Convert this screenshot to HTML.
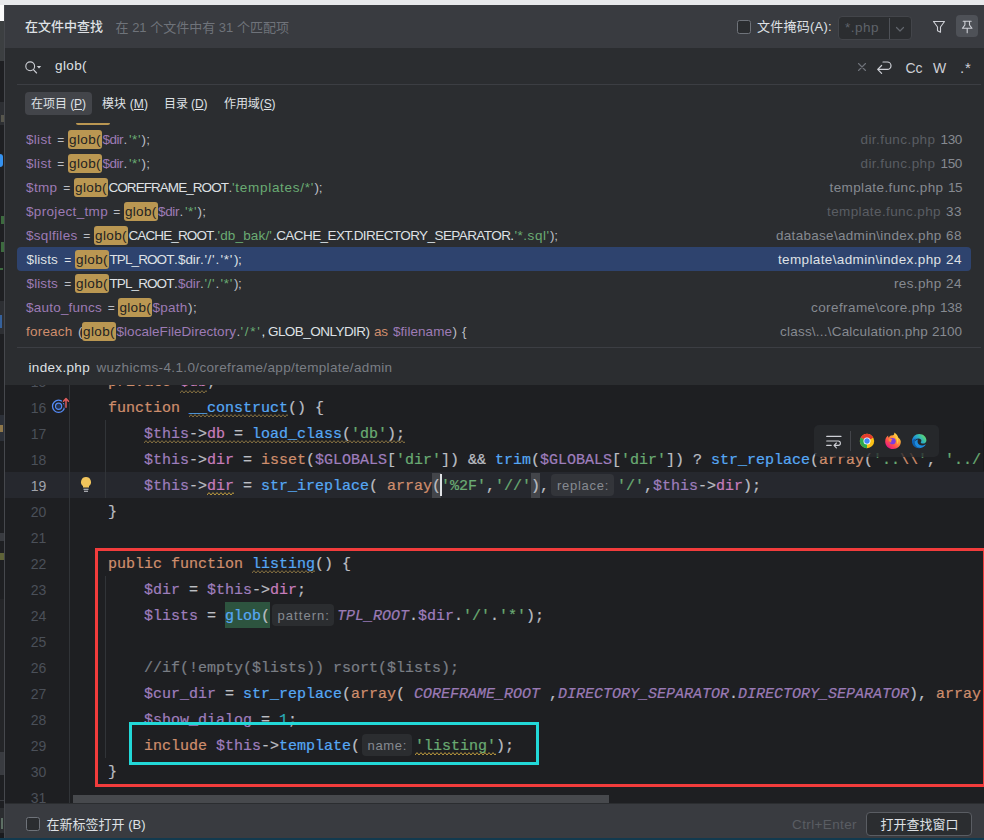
<!DOCTYPE html>
<html lang="zh-CN">
<head>
<meta charset="utf-8">
<title>在文件中查找</title>
<style>
*{box-sizing:border-box}
html,body{margin:0;padding:0}
body{width:984px;height:840px;overflow:hidden;position:relative;background:#1e1f22;font-family:"Liberation Sans","Noto Sans CJK SC",sans-serif;font-size:13px;color:#dfe1e5}
.a{position:absolute}
.t{position:absolute;white-space:pre;line-height:20px;height:20px}
.ui{font-family:"Liberation Sans","Noto Sans CJK SC",sans-serif}
.m{font-family:"Liberation Mono","Noto Sans CJK SC",monospace;font-size:15px;-webkit-text-stroke:0.22px}
.b{font-weight:bold}
.i{font-style:italic}
</style>
</head>
<body>
<div class="a" style="left:0px;top:0px;width:984px;height:5px;background:#e8e9eb"></div>
<div class="a" style="left:0px;top:5px;width:5px;height:15.5px;background:#fbfbfb"></div>
<div class="a" style="left:0px;top:20.5px;width:5px;height:40.5px;background:#3c3f41"></div>
<div class="a" style="left:0px;top:61px;width:5px;height:41px;background:#1e1f22"></div>
<div class="a" style="left:0px;top:102px;width:5px;height:23px;background:#2d2f33"></div>
<div class="a" style="left:1px;top:115px;width:3px;height:7px;background:#57564c"></div>
<div class="a" style="left:0px;top:125px;width:5px;height:683px;background:#1e1f22"></div>
<div class="a" style="left:0px;top:154px;width:2.5px;height:12.5px;background:#3592f0;border-radius:0 3px 3px 0"></div>
<div class="a" style="left:1px;top:216px;width:3px;height:8px;background:#3d6b3f"></div>
<div class="a" style="left:1px;top:242px;width:3px;height:10px;background:#3d6b3f"></div>
<div class="a" style="left:0px;top:268px;width:3px;height:1.5px;background:#3d6b3f"></div>
<div class="a" style="left:0px;top:301px;width:5px;height:33px;background:#2d2f33"></div>
<div class="a" style="left:0px;top:315px;width:2px;height:13px;background:#35619c"></div>
<div class="a" style="left:0px;top:415px;width:5px;height:26px;background:#2c3038"></div>
<div class="a" style="left:0px;top:425px;width:3px;height:7px;background:#8f774a"></div>
<div class="a" style="left:0px;top:533px;width:5px;height:8px;background:#393b40"></div>
<div class="a" style="left:0px;top:553px;width:4px;height:7px;background:#5f6338"></div>
<div class="a" style="left:0px;top:599px;width:5px;height:153px;background:#242528"></div>
<div class="a" style="left:0px;top:752px;width:5px;height:23px;background:#393b40"></div>
<div class="a" style="left:0px;top:800px;width:5px;height:1px;background:#393b40"></div>
<div class="a" style="left:0px;top:808px;width:5px;height:25px;background:#2b2d30"></div>
<div class="a" style="left:1px;top:818px;width:2px;height:11px;background:#5d6f64"></div>
<div class="a" style="left:0px;top:833px;width:5px;height:7px;background:#1a1b1e"></div>
<div class="a" style="left:5px;top:5px;width:979px;height:833px;background:#2b2d30"></div>
<div class="a" style="left:5px;top:5px;width:979px;height:43px;background:#393b40"></div>
<div class="a" style="left:4px;top:5px;width:1px;height:833px;background:#46484d"></div>
<div class="a" style="left:0px;top:838px;width:984px;height:2px;background:#123a4f"></div>
<span class="t ui" style="left:25px;top:17px;font-size:13px;color:#dfe1e5;font-weight:500;">在文件中查找</span>
<span class="t ui" style="left:115.5px;top:18px;font-size:13px;color:#6f737a;letter-spacing:0.007px;">在 21 个文件中有 31 个匹配项</span>
<div class="a" style="left:737px;top:20px;width:14px;height:14px;border:1px solid #6f737a;border-radius:2.5px;background:#2b2d30"></div>
<span class="t ui" style="left:757px;top:17px;font-size:13px;color:#dfe1e5;letter-spacing:0.256px;">文件掩码(A):</span>
<div class="a" style="left:838px;top:16px;width:73.5px;height:23.5px;border:1px solid #43454a;border-radius:4px;background:#2b2d30"></div>
<div class="a" style="left:889px;top:18px;width:1px;height:21px;background:#4e5157"></div>
<span class="t ui" style="left:845px;top:18px;font-size:13.5px;color:#5f636a;letter-spacing:0.494px;">*.php</span>
<svg class="a" style="left:894px;top:23.7px" width="12" height="10" viewBox="0 0 12 10"><path d="M2.5 3.5 L6 7 L9.5 3.5" fill="none" stroke="#62666d" stroke-width="1.2" stroke-linecap="round" stroke-linejoin="round"/></svg>
<svg class="a" style="left:931px;top:18.6px" width="16" height="16" viewBox="0 0 16 16"><path d="M2.5 2.5 H13.5 L9.5 8 V13.2 L6.5 11.7 V8 Z" fill="none" stroke="#ced0d6" stroke-width="1.1" stroke-linejoin="round"/></svg>
<div class="a" style="left:956px;top:15px;width:22px;height:22px;background:#4e5157;border-radius:4px"></div>
<svg class="a" style="left:959px;top:18px" width="16" height="16" viewBox="0 0 16 16"><path d="M4.2 3.3 H12.2 M5.9 3.3 V7 L3.4 10.3 H13 L10.5 7 V3.3 M8.2 10.3 V14.7" fill="none" stroke="#ced0d6" stroke-width="1.1" stroke-linecap="round" stroke-linejoin="round"/></svg>
<svg class="a" style="left:23px;top:59px" width="22" height="16" viewBox="0 0 22 16"><circle cx="7.2" cy="7.3" r="4.4" fill="none" stroke="#ced0d6" stroke-width="1.1"/><path d="M10.4 10.6 L13.6 14" stroke="#ced0d6" stroke-width="1.1" stroke-linecap="round"/><path d="M13.8 7 H18.2 L16 9.4 Z" fill="#ced0d6"/></svg>
<span class="t ui" style="left:55px;top:56px;font-size:13.5px;color:#dfe1e5;letter-spacing:0.394px;">glob(</span>
<svg class="a" style="left:856px;top:61px" width="12" height="12" viewBox="0 0 12 12"><path d="M2.5 2.5 L9.5 9.5 M9.5 2.5 L2.5 9.5" stroke="#6f737a" stroke-width="1.1" stroke-linecap="round"/></svg>
<svg class="a" style="left:876px;top:58px" width="18" height="18" viewBox="0 0 18 18"><path d="M7 4 H11.3 A3.7 3.7 0 0 1 11.3 11.4 H1.8 M5.6 7.5 L1.7 11.4 L5.6 15.3" fill="none" stroke="#ced0d6" stroke-width="1.2" stroke-linecap="round" stroke-linejoin="round"/></svg>
<span class="t ui" style="left:905.5px;top:57.5px;font-size:14px;color:#ced0d6;letter-spacing:-0.062px;">Cc</span>
<span class="t ui" style="left:933px;top:57.5px;font-size:14px;color:#ced0d6;letter-spacing:0.781px;">W</span>
<span class="t ui" style="left:960px;top:58px;font-size:15px;color:#ced0d6;letter-spacing:0.742px;">.*</span>
<div class="a" style="left:17px;top:84px;width:964px;height:1px;background:#3c3e43"></div>
<div class="a" style="left:25px;top:92px;width:67px;height:23px;background:#43454a;border-radius:4px"></div>
<span class="t ui" style="left:31px;top:94px;font-size:12px;color:#dfe1e5;letter-spacing:-0.051px;">在项目 (<u>P</u>)</span>
<span class="t ui" style="left:102px;top:94px;font-size:12px;color:#dfe1e5;letter-spacing:0.109px;">模块 (<u>M</u>)</span>
<span class="t ui" style="left:164px;top:94px;font-size:12px;color:#dfe1e5;letter-spacing:-0.086px;">目录 (<u>D</u>)</span>
<span class="t ui" style="left:224px;top:94px;font-size:12px;color:#dfe1e5;letter-spacing:-0.086px;">作用域(<u>S</u>)</span>
<div class="a" style="left:76px;top:122.5px;width:34px;height:2.2px;background:#ba9752;border-radius:0 0 3px 3px"></div>
<span class="t ui" style="left:26px;top:130px;font-size:13.5px;color:#9d7bb5;letter-spacing:0.297px;">$list</span>
<span class="t ui" style="left:57.3px;top:130px;font-size:12px;color:#bcbec4;">=</span>
<div class="a" style="left:67.7px;top:129.7px;width:34.6px;height:19.3px;background:#ba9752;border-radius:3px"></div>
<span class="t ui" style="left:69px;top:130px;font-size:13.5px;color:#1e1f22;letter-spacing:0.394px;">glob(</span>
<span class="t ui" style="left:102.5px;top:130px;font-size:13.5px;color:#9d7bb5;letter-spacing:-0.504px;">$dir</span>
<span class="t ui" style="left:123.5px;top:130px;font-size:13.5px;color:#bcbec4;letter-spacing:1.734px;">.</span>
<span class="t ui" style="left:129px;top:130px;font-size:13.5px;color:#6aab73;letter-spacing:0.526px;">&#x27;*&#x27;</span>
<span class="t ui" style="left:141.5px;top:130px;font-size:13.5px;color:#bcbec4;letter-spacing:0.375px;">);</span>
<span class="t ui" style="left:860.5px;top:130px;font-size:13.5px;color:#5a5d63;letter-spacing:0.432px;">dir.func.php</span>
<span class="t ui" style="left:940.5px;top:130px;font-size:13.5px;color:#868a91;letter-spacing:-0.344px;">130</span>
<span class="t ui" style="left:26px;top:154px;font-size:13.5px;color:#9d7bb5;letter-spacing:0.297px;">$list</span>
<span class="t ui" style="left:57.3px;top:154px;font-size:12px;color:#bcbec4;">=</span>
<div class="a" style="left:67.7px;top:153.7px;width:34.6px;height:19.3px;background:#ba9752;border-radius:3px"></div>
<span class="t ui" style="left:69px;top:154px;font-size:13.5px;color:#1e1f22;letter-spacing:0.394px;">glob(</span>
<span class="t ui" style="left:102.5px;top:154px;font-size:13.5px;color:#9d7bb5;letter-spacing:-0.504px;">$dir</span>
<span class="t ui" style="left:123.5px;top:154px;font-size:13.5px;color:#bcbec4;letter-spacing:1.734px;">.</span>
<span class="t ui" style="left:129px;top:154px;font-size:13.5px;color:#6aab73;letter-spacing:0.526px;">&#x27;*&#x27;</span>
<span class="t ui" style="left:141.5px;top:154px;font-size:13.5px;color:#bcbec4;letter-spacing:0.375px;">);</span>
<span class="t ui" style="left:860.5px;top:154px;font-size:13.5px;color:#5a5d63;letter-spacing:0.432px;">dir.func.php</span>
<span class="t ui" style="left:940.5px;top:154px;font-size:13.5px;color:#868a91;letter-spacing:-0.344px;">150</span>
<span class="t ui" style="left:26px;top:178px;font-size:13.5px;color:#9d7bb5;letter-spacing:0.371px;">$tmp</span>
<span class="t ui" style="left:63.3px;top:178px;font-size:12px;color:#bcbec4;">=</span>
<div class="a" style="left:73.7px;top:177.7px;width:34.6px;height:19.3px;background:#ba9752;border-radius:3px"></div>
<span class="t ui" style="left:75px;top:178px;font-size:13.5px;color:#1e1f22;letter-spacing:0.394px;">glob(</span>
<span class="t ui" style="left:108.5px;top:178px;font-size:13.5px;color:#dfe1e5;letter-spacing:-0.948px;">COREFRAME_ROOT</span>
<span class="t ui" style="left:228.5px;top:178px;font-size:13.5px;color:#bcbec4;letter-spacing:-0.266px;">.</span>
<span class="t ui" style="left:232px;top:178px;font-size:13.5px;color:#6aab73;letter-spacing:0.715px;">&#x27;templates/*&#x27;</span>
<span class="t ui" style="left:314.5px;top:178px;font-size:13.5px;color:#bcbec4;letter-spacing:-0.125px;">);</span>
<span class="t ui" style="left:829.5px;top:178px;font-size:13.5px;color:#868a91;letter-spacing:0.392px;">template.func.php</span>
<span class="t ui" style="left:948px;top:178px;font-size:13.5px;color:#868a91;letter-spacing:-0.516px;">15</span>
<span class="t ui" style="left:26px;top:202px;font-size:13.5px;color:#9d7bb5;letter-spacing:0.329px;">$project_tmp</span>
<span class="t ui" style="left:113.3px;top:202px;font-size:12px;color:#bcbec4;">=</span>
<div class="a" style="left:123.7px;top:201.7px;width:34.1px;height:19.3px;background:#ba9752;border-radius:3px"></div>
<span class="t ui" style="left:125px;top:202px;font-size:13.5px;color:#1e1f22;letter-spacing:0.294px;">glob(</span>
<span class="t ui" style="left:158px;top:202px;font-size:13.5px;color:#9d7bb5;letter-spacing:-0.379px;">$dir</span>
<span class="t ui" style="left:179.5px;top:202px;font-size:13.5px;color:#bcbec4;letter-spacing:1.734px;">.</span>
<span class="t ui" style="left:185px;top:202px;font-size:13.5px;color:#6aab73;letter-spacing:0.526px;">&#x27;*&#x27;</span>
<span class="t ui" style="left:197.5px;top:202px;font-size:13.5px;color:#bcbec4;letter-spacing:0.375px;">);</span>
<span class="t ui" style="left:827px;top:202px;font-size:13.5px;color:#5a5d63;letter-spacing:0.392px;">template.func.php</span>
<span class="t ui" style="left:946px;top:202px;font-size:13.5px;color:#868a91;letter-spacing:0.484px;">33</span>
<span class="t ui" style="left:26px;top:226px;font-size:13.5px;color:#9d7bb5;letter-spacing:0.302px;">$sqlfiles</span>
<span class="t ui" style="left:83.3px;top:226px;font-size:12px;color:#bcbec4;">=</span>
<div class="a" style="left:93.7px;top:225.7px;width:34.6px;height:19.3px;background:#ba9752;border-radius:3px"></div>
<span class="t ui" style="left:95px;top:226px;font-size:13.5px;color:#1e1f22;letter-spacing:0.394px;">glob(</span>
<span class="t ui" style="left:128.5px;top:226px;font-size:13.5px;color:#dfe1e5;letter-spacing:-0.877px;">CACHE_ROOT</span>
<span class="t ui" style="left:214px;top:226px;font-size:13.5px;color:#bcbec4;letter-spacing:-0.266px;">.</span>
<span class="t ui" style="left:217.5px;top:226px;font-size:13.5px;color:#6aab73;letter-spacing:0.144px;">&#x27;db_bak/&#x27;</span>
<span class="t ui" style="left:273px;top:226px;font-size:13.5px;color:#dfe1e5;letter-spacing:-0.575px;">.CACHE_EXT.DIRECTORY_SEPARATOR.</span>
<span class="t ui" style="left:514.5px;top:226px;font-size:13.5px;color:#6aab73;letter-spacing:0.511px;">&#x27;*.sql&#x27;</span>
<span class="t ui" style="left:550px;top:226px;font-size:13.5px;color:#bcbec4;letter-spacing:-0.125px;">);</span>
<span class="t ui" style="left:776px;top:226px;font-size:13.5px;color:#868a91;letter-spacing:0.297px;">database\admin\index.php</span>
<span class="t ui" style="left:946px;top:226px;font-size:13.5px;color:#868a91;letter-spacing:0.484px;">68</span>
<div class="a" style="left:17px;top:247px;width:954px;height:24px;background:#2e436e;border-radius:4px"></div>
<span class="t ui" style="left:26.5px;top:250px;font-size:13.5px;color:#dfe1e5;letter-spacing:0.122px;">$lists</span>
<span class="t ui" style="left:64.3px;top:250px;font-size:12px;color:#dfe1e5;">=</span>
<div class="a" style="left:74.7px;top:249.7px;width:34.6px;height:19.3px;background:#ba9752;border-radius:3px"></div>
<span class="t ui" style="left:76px;top:250px;font-size:13.5px;color:#1e1f22;letter-spacing:0.394px;">glob(</span>
<span class="t ui" style="left:109.5px;top:250px;font-size:13.5px;color:#dfe1e5;letter-spacing:-0.908px;">TPL_ROOT</span>
<span class="t ui" style="left:174px;top:250px;font-size:13.5px;color:#dfe1e5;letter-spacing:-0.266px;">.</span>
<span class="t ui" style="left:178px;top:250px;font-size:13.5px;color:#dfe1e5;letter-spacing:-0.129px;">$dir</span>
<span class="t ui" style="left:200px;top:250px;font-size:13.5px;color:#dfe1e5;letter-spacing:0.234px;">.</span>
<span class="t ui" style="left:204.5px;top:250px;font-size:13.5px;color:#dfe1e5;letter-spacing:0.531px;">&#x27;/&#x27;</span>
<span class="t ui" style="left:215.5px;top:250px;font-size:13.5px;color:#dfe1e5;letter-spacing:0.234px;">.</span>
<span class="t ui" style="left:220.5px;top:250px;font-size:13.5px;color:#dfe1e5;letter-spacing:0.693px;">&#x27;*&#x27;</span>
<span class="t ui" style="left:234px;top:250px;font-size:13.5px;color:#dfe1e5;letter-spacing:-0.375px;">);</span>
<span class="t ui" style="left:778px;top:250px;font-size:13.5px;color:#dfe1e5;letter-spacing:0.370px;">template\admin\index.php</span>
<span class="t ui" style="left:946px;top:250px;font-size:13.5px;color:#dfe1e5;letter-spacing:0.484px;">24</span>
<span class="t ui" style="left:26.5px;top:274px;font-size:13.5px;color:#9d7bb5;letter-spacing:0.122px;">$lists</span>
<span class="t ui" style="left:64.3px;top:274px;font-size:12px;color:#bcbec4;">=</span>
<div class="a" style="left:74.7px;top:273.7px;width:34.6px;height:19.3px;background:#ba9752;border-radius:3px"></div>
<span class="t ui" style="left:76px;top:274px;font-size:13.5px;color:#1e1f22;letter-spacing:0.394px;">glob(</span>
<span class="t ui" style="left:109.5px;top:274px;font-size:13.5px;color:#dfe1e5;letter-spacing:-0.908px;">TPL_ROOT</span>
<span class="t ui" style="left:174px;top:274px;font-size:13.5px;color:#bcbec4;letter-spacing:-0.266px;">.</span>
<span class="t ui" style="left:178px;top:274px;font-size:13.5px;color:#9d7bb5;letter-spacing:-0.129px;">$dir</span>
<span class="t ui" style="left:200px;top:274px;font-size:13.5px;color:#bcbec4;letter-spacing:0.234px;">.</span>
<span class="t ui" style="left:204.5px;top:274px;font-size:13.5px;color:#6aab73;letter-spacing:0.531px;">&#x27;/&#x27;</span>
<span class="t ui" style="left:215.5px;top:274px;font-size:13.5px;color:#bcbec4;letter-spacing:0.234px;">.</span>
<span class="t ui" style="left:220.5px;top:274px;font-size:13.5px;color:#6aab73;letter-spacing:0.693px;">&#x27;*&#x27;</span>
<span class="t ui" style="left:234px;top:274px;font-size:13.5px;color:#bcbec4;letter-spacing:-0.375px;">);</span>
<span class="t ui" style="left:894px;top:274px;font-size:13.5px;color:#868a91;letter-spacing:0.353px;">res.php</span>
<span class="t ui" style="left:946px;top:274px;font-size:13.5px;color:#868a91;letter-spacing:0.484px;">24</span>
<span class="t ui" style="left:26px;top:298px;font-size:13.5px;color:#9d7bb5;letter-spacing:0.222px;">$auto_funcs</span>
<span class="t ui" style="left:107.8px;top:298px;font-size:12px;color:#bcbec4;">=</span>
<div class="a" style="left:118.2px;top:297.7px;width:34.1px;height:19.3px;background:#ba9752;border-radius:3px"></div>
<span class="t ui" style="left:119.5px;top:298px;font-size:13.5px;color:#1e1f22;letter-spacing:0.294px;">glob(</span>
<span class="t ui" style="left:152.5px;top:298px;font-size:13.5px;color:#9d7bb5;letter-spacing:0.241px;">$path</span>
<span class="t ui" style="left:188px;top:298px;font-size:13.5px;color:#bcbec4;letter-spacing:0.625px;">);</span>
<span class="t ui" style="left:811px;top:298px;font-size:13.5px;color:#868a91;letter-spacing:0.413px;">coreframe\core.php</span>
<span class="t ui" style="left:940px;top:298px;font-size:13.5px;color:#868a91;letter-spacing:-0.177px;">138</span>
<span class="t ui" style="left:26px;top:322px;font-size:13.5px;color:#cf8e6d;letter-spacing:0.210px;">foreach</span>
<span class="t ui" style="left:78px;top:322px;font-size:13.5px;color:#bcbec4;letter-spacing:-0.500px;">(</span>
<div class="a" style="left:81.7px;top:321.7px;width:34.6px;height:19.3px;background:#ba9752;border-radius:3px"></div>
<span class="t ui" style="left:83px;top:322px;font-size:13.5px;color:#1e1f22;letter-spacing:0.394px;">glob(</span>
<span class="t ui" style="left:116.5px;top:322px;font-size:13.5px;color:#9d7bb5;letter-spacing:0.048px;">$localeFileDirectory</span>
<span class="t ui" style="left:236.5px;top:322px;font-size:13.5px;color:#bcbec4;letter-spacing:-0.266px;">.</span>
<span class="t ui" style="left:240.5px;top:322px;font-size:13.5px;color:#6aab73;letter-spacing:1.707px;">&#x27;/*&#x27;</span>
<span class="t ui" style="left:261.5px;top:322px;font-size:13.5px;color:#dfe1e5;letter-spacing:-0.535px;">, GLOB_ONLYDIR)</span>
<span class="t ui" style="left:374px;top:322px;font-size:13.5px;color:#cf8e6d;letter-spacing:-0.383px;">as</span>
<span class="t ui" style="left:393px;top:322px;font-size:13.5px;color:#9d7bb5;letter-spacing:0.050px;">$filename</span>
<span class="t ui" style="left:452.5px;top:322px;font-size:13.5px;color:#bcbec4;letter-spacing:0.578px;">) {</span>
<span class="t ui" style="left:780px;top:322px;font-size:13.5px;color:#868a91;letter-spacing:0.217px;">class\...\Calculation.php</span>
<span class="t ui" style="left:932px;top:322px;font-size:13.5px;color:#868a91;letter-spacing:-0.012px;">2100</span>
<div class="a" style="left:17px;top:347px;width:964px;height:1px;background:#3c3e43"></div>
<span class="t ui" style="left:28.5px;top:358.4px;font-size:13.5px;color:#dfe1e5;letter-spacing:0.326px;">index.php</span>
<span class="t ui" style="left:96.5px;top:358.4px;font-size:13.5px;color:#7a7e85;letter-spacing:0.357px;">wuzhicms-4.1.0/coreframe/app/template/admin</span>
<div class="a" style="left:5px;top:385px;width:979px;height:418px;background:#1e1f22"></div>
<div class="a" style="left:5px;top:472px;width:979px;height:26px;background:#26282e"></div>
<div class="a" style="left:69px;top:385px;width:1px;height:418px;background:#313438"></div>
<div class="a" style="left:105px;top:420px;width:1px;height:78px;background:#313438"></div>
<div class="a" style="left:105px;top:576px;width:1px;height:182px;background:#313438"></div>
<span class="t ui" style="left:16.3px;top:369px;font-size:14px;color:#4b5059;text-align:right;width:30px;clip-path:inset(16px 0 0 0);line-height:26px;height:26px;">15</span>
<span class="t ui" style="left:16.3px;top:395px;font-size:14px;color:#4b5059;text-align:right;width:30px;line-height:26px;height:26px;">16</span>
<span class="t ui" style="left:16.3px;top:421px;font-size:14px;color:#4b5059;text-align:right;width:30px;line-height:26px;height:26px;">17</span>
<span class="t ui" style="left:16.3px;top:447px;font-size:14px;color:#4b5059;text-align:right;width:30px;line-height:26px;height:26px;">18</span>
<span class="t ui" style="left:16.3px;top:473px;font-size:14px;color:#a1a3ab;text-align:right;width:30px;line-height:26px;height:26px;">19</span>
<span class="t ui" style="left:16.3px;top:499px;font-size:14px;color:#4b5059;text-align:right;width:30px;line-height:26px;height:26px;">20</span>
<span class="t ui" style="left:16.3px;top:525px;font-size:14px;color:#4b5059;text-align:right;width:30px;line-height:26px;height:26px;">21</span>
<span class="t ui" style="left:16.3px;top:551px;font-size:14px;color:#4b5059;text-align:right;width:30px;line-height:26px;height:26px;">22</span>
<span class="t ui" style="left:16.3px;top:577px;font-size:14px;color:#4b5059;text-align:right;width:30px;line-height:26px;height:26px;">23</span>
<span class="t ui" style="left:16.3px;top:603px;font-size:14px;color:#4b5059;text-align:right;width:30px;line-height:26px;height:26px;">24</span>
<span class="t ui" style="left:16.3px;top:629px;font-size:14px;color:#4b5059;text-align:right;width:30px;line-height:26px;height:26px;">25</span>
<span class="t ui" style="left:16.3px;top:655px;font-size:14px;color:#4b5059;text-align:right;width:30px;line-height:26px;height:26px;">26</span>
<span class="t ui" style="left:16.3px;top:681px;font-size:14px;color:#4b5059;text-align:right;width:30px;line-height:26px;height:26px;">27</span>
<span class="t ui" style="left:16.3px;top:707px;font-size:14px;color:#4b5059;text-align:right;width:30px;line-height:26px;height:26px;">28</span>
<span class="t ui" style="left:16.3px;top:733px;font-size:14px;color:#4b5059;text-align:right;width:30px;line-height:26px;height:26px;">29</span>
<span class="t ui" style="left:16.3px;top:759px;font-size:14px;color:#4b5059;text-align:right;width:30px;line-height:26px;height:26px;">30</span>
<span class="t ui" style="left:16.3px;top:785px;font-size:14px;color:#4b5059;text-align:right;width:30px;clip-path:inset(0 0 8px 0);line-height:26px;height:26px;">31</span>
<span class="t m" style="left:108px;top:370px;font-size:15px;color:#cf8e6d;clip-path:inset(15px 0 0 0);line-height:26px;height:26px;">private</span>
<span class="t m" style="left:180px;top:370px;font-size:15px;color:#c77dbb;clip-path:inset(15px 0 0 0);line-height:26px;height:26px;">$db</span>
<span class="t m" style="left:207px;top:370px;font-size:15px;color:#bcbec4;clip-path:inset(15px 0 0 0);line-height:26px;height:26px;">;</span>
<svg class="a" style="left:180px;top:389.5px" width="27" height="4.5" viewBox="0 0 27 4.5"><path d="M0 3.0 L2 0.6 L4 3 L6 0.6 L8 3 L10 0.6 L12 3 L14 0.6 L16 3 L18 0.6 L20 3 L22 0.6 L24 3 L26 0.6 L28 3" fill="none" stroke="#857042" stroke-width="1"/></svg>
<span class="t m" style="left:108px;top:396px;font-size:15px;color:#cf8e6d;line-height:26px;height:26px;">function</span>
<span class="t m" style="left:189px;top:396px;font-size:15px;color:#56a8f5;line-height:26px;height:26px;">__construct</span>
<svg class="a" style="left:189px;top:414.3px" width="99" height="4.5" viewBox="0 0 99 4.5"><path d="M0 3.0 L2 0.6 L4 3 L6 0.6 L8 3 L10 0.6 L12 3 L14 0.6 L16 3 L18 0.6 L20 3 L22 0.6 L24 3 L26 0.6 L28 3 L30 0.6 L32 3 L34 0.6 L36 3 L38 0.6 L40 3 L42 0.6 L44 3 L46 0.6 L48 3 L50 0.6 L52 3 L54 0.6 L56 3 L58 0.6 L60 3 L62 0.6 L64 3 L66 0.6 L68 3 L70 0.6 L72 3 L74 0.6 L76 3 L78 0.6 L80 3 L82 0.6 L84 3 L86 0.6 L88 3 L90 0.6 L92 3 L94 0.6 L96 3 L98 0.6 L100 3" fill="none" stroke="#857042" stroke-width="1"/></svg>
<span class="t m" style="left:288px;top:396px;font-size:15px;color:#bcbec4;line-height:26px;height:26px;">() {</span>
<span class="t m" style="left:144px;top:422px;font-size:15px;color:#9e7ebd;line-height:26px;height:26px;">$this</span>
<span class="t m" style="left:189px;top:422px;font-size:15px;color:#bcbec4;line-height:26px;height:26px;">-&gt;</span>
<span class="t m" style="left:207px;top:422px;font-size:15px;color:#c77dbb;line-height:26px;height:26px;">db</span>
<span class="t m" style="left:225px;top:422px;font-size:15px;color:#bcbec4;line-height:26px;height:26px;"> = </span>
<span class="t m" style="left:252px;top:422px;font-size:15px;color:#56a8f5;line-height:26px;height:26px;">load_class</span>
<span class="t m" style="left:342px;top:422px;font-size:15px;color:#bcbec4;line-height:26px;height:26px;">(</span>
<span class="t m" style="left:351px;top:422px;font-size:15px;color:#6aab73;line-height:26px;height:26px;">&#x27;db&#x27;</span>
<span class="t m" style="left:387px;top:422px;font-size:15px;color:#bcbec4;line-height:26px;height:26px;">);</span>
<svg class="a" style="left:144px;top:440.3px" width="261" height="4.5" viewBox="0 0 261 4.5"><path d="M0 3.0 L2 0.6 L4 3 L6 0.6 L8 3 L10 0.6 L12 3 L14 0.6 L16 3 L18 0.6 L20 3 L22 0.6 L24 3 L26 0.6 L28 3 L30 0.6 L32 3 L34 0.6 L36 3 L38 0.6 L40 3 L42 0.6 L44 3 L46 0.6 L48 3 L50 0.6 L52 3 L54 0.6 L56 3 L58 0.6 L60 3 L62 0.6 L64 3 L66 0.6 L68 3 L70 0.6 L72 3 L74 0.6 L76 3 L78 0.6 L80 3 L82 0.6 L84 3 L86 0.6 L88 3 L90 0.6 L92 3 L94 0.6 L96 3 L98 0.6 L100 3 L102 0.6 L104 3 L106 0.6 L108 3 L110 0.6 L112 3 L114 0.6 L116 3 L118 0.6 L120 3 L122 0.6 L124 3 L126 0.6 L128 3 L130 0.6 L132 3 L134 0.6 L136 3 L138 0.6 L140 3 L142 0.6 L144 3 L146 0.6 L148 3 L150 0.6 L152 3 L154 0.6 L156 3 L158 0.6 L160 3 L162 0.6 L164 3 L166 0.6 L168 3 L170 0.6 L172 3 L174 0.6 L176 3 L178 0.6 L180 3 L182 0.6 L184 3 L186 0.6 L188 3 L190 0.6 L192 3 L194 0.6 L196 3 L198 0.6 L200 3 L202 0.6 L204 3 L206 0.6 L208 3 L210 0.6 L212 3 L214 0.6 L216 3 L218 0.6 L220 3 L222 0.6 L224 3 L226 0.6 L228 3 L230 0.6 L232 3 L234 0.6 L236 3 L238 0.6 L240 3 L242 0.6 L244 3 L246 0.6 L248 3 L250 0.6 L252 3 L254 0.6 L256 3 L258 0.6 L260 3 L262 0.6" fill="none" stroke="#857042" stroke-width="1"/></svg>
<span class="t m" style="left:144px;top:448px;font-size:15px;color:#9e7ebd;line-height:26px;height:26px;">$this</span>
<span class="t m" style="left:189px;top:448px;font-size:15px;color:#bcbec4;line-height:26px;height:26px;">-&gt;</span>
<span class="t m" style="left:207px;top:448px;font-size:15px;color:#c77dbb;line-height:26px;height:26px;">dir</span>
<span class="t m" style="left:234px;top:448px;font-size:15px;color:#bcbec4;line-height:26px;height:26px;"> = </span>
<span class="t m" style="left:261px;top:448px;font-size:15px;color:#cf8e6d;line-height:26px;height:26px;">isset</span>
<span class="t m" style="left:306px;top:448px;font-size:15px;color:#bcbec4;line-height:26px;height:26px;">(</span>
<span class="t m" style="left:315px;top:448px;font-size:15px;color:#9e7ebd;line-height:26px;height:26px;">$GLOBALS</span>
<span class="t m" style="left:387px;top:448px;font-size:15px;color:#bcbec4;line-height:26px;height:26px;">[</span>
<span class="t m" style="left:396px;top:448px;font-size:15px;color:#6aab73;line-height:26px;height:26px;">&#x27;dir&#x27;</span>
<span class="t m" style="left:441px;top:448px;font-size:15px;color:#bcbec4;line-height:26px;height:26px;">])</span>
<span class="t m" style="left:459px;top:448px;font-size:15px;color:#bcbec4;line-height:26px;height:26px;"> &amp;&amp; </span>
<span class="t m" style="left:495px;top:448px;font-size:15px;color:#56a8f5;line-height:26px;height:26px;">trim</span>
<span class="t m" style="left:531px;top:448px;font-size:15px;color:#bcbec4;line-height:26px;height:26px;">(</span>
<span class="t m" style="left:540px;top:448px;font-size:15px;color:#9e7ebd;line-height:26px;height:26px;">$GLOBALS</span>
<span class="t m" style="left:612px;top:448px;font-size:15px;color:#bcbec4;line-height:26px;height:26px;">[</span>
<span class="t m" style="left:621px;top:448px;font-size:15px;color:#6aab73;line-height:26px;height:26px;">&#x27;dir&#x27;</span>
<span class="t m" style="left:666px;top:448px;font-size:15px;color:#bcbec4;line-height:26px;height:26px;">])</span>
<span class="t m" style="left:684px;top:448px;font-size:15px;color:#bcbec4;line-height:26px;height:26px;"> ? </span>
<span class="t m" style="left:711px;top:448px;font-size:15px;color:#56a8f5;line-height:26px;height:26px;">str_replace</span>
<span class="t m" style="left:810px;top:448px;font-size:15px;color:#bcbec4;line-height:26px;height:26px;">(</span>
<span class="t m" style="left:819px;top:448px;font-size:15px;color:#cf8e6d;line-height:26px;height:26px;">array</span>
<span class="t m" style="left:864px;top:448px;font-size:15px;color:#bcbec4;line-height:26px;height:26px;">(</span>
<span class="t m" style="left:873px;top:448px;font-size:15px;color:#6aab73;line-height:26px;height:26px;">&#x27;..</span>
<span class="t m" style="left:900px;top:448px;font-size:15px;color:#cf8e6d;line-height:26px;height:26px;">\\</span>
<span class="t m" style="left:918px;top:448px;font-size:15px;color:#6aab73;line-height:26px;height:26px;">&#x27;</span>
<span class="t m" style="left:927px;top:448px;font-size:15px;color:#bcbec4;line-height:26px;height:26px;">, </span>
<span class="t m" style="left:945px;top:448px;font-size:15px;color:#6aab73;line-height:26px;height:26px;">&#x27;../</span>
<div class="a" style="left:432px;top:472.5px;width:9.3px;height:25px;background:#43454a"></div>
<div class="a" style="left:531px;top:472.5px;width:9.3px;height:25px;background:#43454a"></div>
<span class="t m" style="left:144px;top:474px;font-size:15px;color:#9e7ebd;line-height:26px;height:26px;">$this</span>
<span class="t m" style="left:189px;top:474px;font-size:15px;color:#bcbec4;line-height:26px;height:26px;">-&gt;</span>
<span class="t m" style="left:207px;top:474px;font-size:15px;color:#c77dbb;line-height:26px;height:26px;">dir</span>
<svg class="a" style="left:207px;top:492.3px" width="27" height="4.5" viewBox="0 0 27 4.5"><path d="M0 3.0 L2 0.6 L4 3 L6 0.6 L8 3 L10 0.6 L12 3 L14 0.6 L16 3 L18 0.6 L20 3 L22 0.6 L24 3 L26 0.6 L28 3" fill="none" stroke="#bd9a40" stroke-width="1"/></svg>
<span class="t m" style="left:234px;top:474px;font-size:15px;color:#bcbec4;line-height:26px;height:26px;"> = </span>
<span class="t m" style="left:261px;top:474px;font-size:15px;color:#56a8f5;line-height:26px;height:26px;">str_ireplace</span>
<span class="t m" style="left:369px;top:474px;font-size:15px;color:#bcbec4;line-height:26px;height:26px;">( </span>
<span class="t m" style="left:387px;top:474px;font-size:15px;color:#cf8e6d;line-height:26px;height:26px;">array</span>
<span class="t m" style="left:432px;top:474px;font-size:15px;color:#bcbec4;line-height:26px;height:26px;">(</span>
<span class="t m" style="left:441px;top:474px;font-size:15px;color:#6aab73;line-height:26px;height:26px;">&#x27;%2F&#x27;</span>
<span class="t m" style="left:486px;top:474px;font-size:15px;color:#bcbec4;line-height:26px;height:26px;">,</span>
<span class="t m" style="left:495px;top:474px;font-size:15px;color:#6aab73;line-height:26px;height:26px;">&#x27;//&#x27;</span>
<span class="t m" style="left:531px;top:474px;font-size:15px;color:#bcbec4;line-height:26px;height:26px;">)</span>
<span class="t m" style="left:540px;top:474px;font-size:15px;color:#bcbec4;line-height:26px;height:26px;">,</span>
<div class="a" style="left:440px;top:473.5px;width:2px;height:22.5px;background:#dfe1e5"></div>
<div class="a" style="left:551px;top:474px;width:62.5px;height:21.5px;background:#33353a;border-radius:4px"></div>
<span class="t ui" style="left:557px;top:475.5px;font-size:13px;color:#868a91;letter-spacing:0.719px;">replace:</span>
<span class="t m" style="left:617px;top:474px;font-size:15px;color:#6aab73;line-height:26px;height:26px;">&#x27;/&#x27;</span>
<span class="t m" style="left:644px;top:474px;font-size:15px;color:#bcbec4;line-height:26px;height:26px;">,</span>
<span class="t m" style="left:653px;top:474px;font-size:15px;color:#9e7ebd;line-height:26px;height:26px;">$this</span>
<span class="t m" style="left:698px;top:474px;font-size:15px;color:#bcbec4;line-height:26px;height:26px;">-&gt;</span>
<span class="t m" style="left:716px;top:474px;font-size:15px;color:#c77dbb;line-height:26px;height:26px;">dir</span>
<span class="t m" style="left:743px;top:474px;font-size:15px;color:#bcbec4;line-height:26px;height:26px;">);</span>
<span class="t m" style="left:108px;top:500px;font-size:15px;color:#bcbec4;line-height:26px;height:26px;">}</span>
<span class="t m" style="left:108px;top:552px;font-size:15px;color:#cf8e6d;line-height:26px;height:26px;">public</span>
<span class="t m" style="left:171px;top:552px;font-size:15px;color:#cf8e6d;line-height:26px;height:26px;">function</span>
<span class="t m" style="left:252px;top:552px;font-size:15px;color:#56a8f5;line-height:26px;height:26px;">listing</span>
<svg class="a" style="left:252px;top:570.3px" width="63" height="4.5" viewBox="0 0 63 4.5"><path d="M0 3.0 L2 0.6 L4 3 L6 0.6 L8 3 L10 0.6 L12 3 L14 0.6 L16 3 L18 0.6 L20 3 L22 0.6 L24 3 L26 0.6 L28 3 L30 0.6 L32 3 L34 0.6 L36 3 L38 0.6 L40 3 L42 0.6 L44 3 L46 0.6 L48 3 L50 0.6 L52 3 L54 0.6 L56 3 L58 0.6 L60 3 L62 0.6 L64 3" fill="none" stroke="#857042" stroke-width="1"/></svg>
<span class="t m" style="left:315px;top:552px;font-size:15px;color:#bcbec4;line-height:26px;height:26px;">() {</span>
<span class="t m" style="left:144px;top:578px;font-size:15px;color:#9e7ebd;line-height:26px;height:26px;">$dir</span>
<span class="t m" style="left:180px;top:578px;font-size:15px;color:#bcbec4;line-height:26px;height:26px;"> = </span>
<span class="t m" style="left:207px;top:578px;font-size:15px;color:#9e7ebd;line-height:26px;height:26px;">$this</span>
<span class="t m" style="left:252px;top:578px;font-size:15px;color:#bcbec4;line-height:26px;height:26px;">-&gt;</span>
<span class="t m" style="left:270px;top:578px;font-size:15px;color:#c77dbb;line-height:26px;height:26px;">dir</span>
<span class="t m" style="left:297px;top:578px;font-size:15px;color:#bcbec4;line-height:26px;height:26px;">;</span>
<div class="a" style="left:225px;top:602px;width:45px;height:26px;background:#2d543f"></div>
<span class="t m" style="left:144px;top:604px;font-size:15px;color:#9e7ebd;line-height:26px;height:26px;">$lists</span>
<span class="t m" style="left:198px;top:604px;font-size:15px;color:#bcbec4;line-height:26px;height:26px;"> = </span>
<span class="t m" style="left:225px;top:604px;font-size:15px;color:#56a8f5;line-height:26px;height:26px;">glob</span>
<span class="t m" style="left:261px;top:604px;font-size:15px;color:#bcbec4;line-height:26px;height:26px;">(</span>
<div class="a" style="left:272px;top:604px;width:62px;height:21.5px;background:#2b2d30;border-radius:4px"></div>
<span class="t ui" style="left:277.5px;top:605.5px;font-size:13px;color:#868a91;letter-spacing:1.051px;">pattern:</span>
<span class="t m i" style="left:337px;top:604px;font-size:15px;color:#9a7ab5;line-height:26px;height:26px;">TPL_ROOT</span>
<span class="t m" style="left:409px;top:604px;font-size:15px;color:#bcbec4;line-height:26px;height:26px;">.</span>
<span class="t m" style="left:418px;top:604px;font-size:15px;color:#9e7ebd;line-height:26px;height:26px;">$dir</span>
<span class="t m" style="left:454px;top:604px;font-size:15px;color:#bcbec4;line-height:26px;height:26px;">.</span>
<span class="t m" style="left:463px;top:604px;font-size:15px;color:#6aab73;line-height:26px;height:26px;">&#x27;/&#x27;</span>
<span class="t m" style="left:490px;top:604px;font-size:15px;color:#bcbec4;line-height:26px;height:26px;">.</span>
<span class="t m" style="left:499px;top:604px;font-size:15px;color:#6aab73;line-height:26px;height:26px;">&#x27;*&#x27;</span>
<span class="t m" style="left:526px;top:604px;font-size:15px;color:#bcbec4;line-height:26px;height:26px;">);</span>
<span class="t m" style="left:144px;top:656px;font-size:15px;color:#7a7e85;line-height:26px;height:26px;">//if(!empty($lists)) rsort($lists);</span>
<span class="t m" style="left:144px;top:682px;font-size:15px;color:#9e7ebd;line-height:26px;height:26px;">$cur_dir</span>
<span class="t m" style="left:216px;top:682px;font-size:15px;color:#bcbec4;line-height:26px;height:26px;"> = </span>
<span class="t m" style="left:243px;top:682px;font-size:15px;color:#56a8f5;line-height:26px;height:26px;">str_replace</span>
<span class="t m" style="left:342px;top:682px;font-size:15px;color:#bcbec4;line-height:26px;height:26px;">(</span>
<span class="t m" style="left:351px;top:682px;font-size:15px;color:#cf8e6d;line-height:26px;height:26px;">array</span>
<span class="t m" style="left:396px;top:682px;font-size:15px;color:#bcbec4;line-height:26px;height:26px;">( </span>
<span class="t m i" style="left:414px;top:682px;font-size:15px;color:#9a7ab5;line-height:26px;height:26px;">COREFRAME_ROOT</span>
<span class="t m" style="left:540px;top:682px;font-size:15px;color:#bcbec4;line-height:26px;height:26px;"> ,</span>
<span class="t m i" style="left:558px;top:682px;font-size:15px;color:#9a7ab5;line-height:26px;height:26px;">DIRECTORY_SEPARATOR</span>
<span class="t m" style="left:729px;top:682px;font-size:15px;color:#bcbec4;line-height:26px;height:26px;">.</span>
<span class="t m i" style="left:738px;top:682px;font-size:15px;color:#9a7ab5;line-height:26px;height:26px;">DIRECTORY_SEPARATOR</span>
<span class="t m" style="left:909px;top:682px;font-size:15px;color:#bcbec4;line-height:26px;height:26px;">), </span>
<span class="t m" style="left:936px;top:682px;font-size:15px;color:#cf8e6d;line-height:26px;height:26px;">array</span>
<span class="t m" style="left:144px;top:708px;font-size:15px;color:#9e7ebd;line-height:26px;height:26px;">$show_dialog</span>
<span class="t m" style="left:252px;top:708px;font-size:15px;color:#bcbec4;line-height:26px;height:26px;"> = </span>
<span class="t m" style="left:279px;top:708px;font-size:15px;color:#2aacb8;line-height:26px;height:26px;">1</span>
<span class="t m" style="left:288px;top:708px;font-size:15px;color:#bcbec4;line-height:26px;height:26px;">;</span>
<span class="t m" style="left:144px;top:734px;font-size:15px;color:#cf8e6d;line-height:26px;height:26px;">include</span>
<span class="t m" style="left:216px;top:734px;font-size:15px;color:#9e7ebd;line-height:26px;height:26px;">$this</span>
<span class="t m" style="left:261px;top:734px;font-size:15px;color:#bcbec4;line-height:26px;height:26px;">-&gt;</span>
<span class="t m" style="left:279px;top:734px;font-size:15px;color:#56a8f5;line-height:26px;height:26px;">template</span>
<span class="t m" style="left:351px;top:734px;font-size:15px;color:#bcbec4;line-height:26px;height:26px;">(</span>
<div class="a" style="left:362px;top:734px;width:49.5px;height:21.5px;background:#2b2d30;border-radius:4px"></div>
<span class="t ui" style="left:367.5px;top:735.5px;font-size:13px;color:#868a91;letter-spacing:0.672px;">name:</span>
<span class="t m" style="left:415px;top:734px;font-size:15px;color:#6aab73;line-height:26px;height:26px;">&#x27;listing&#x27;</span>
<svg class="a" style="left:415px;top:752.3px" width="81" height="4.5" viewBox="0 0 81 4.5"><path d="M0 3.0 L2 0.6 L4 3 L6 0.6 L8 3 L10 0.6 L12 3 L14 0.6 L16 3 L18 0.6 L20 3 L22 0.6 L24 3 L26 0.6 L28 3 L30 0.6 L32 3 L34 0.6 L36 3 L38 0.6 L40 3 L42 0.6 L44 3 L46 0.6 L48 3 L50 0.6 L52 3 L54 0.6 L56 3 L58 0.6 L60 3 L62 0.6 L64 3 L66 0.6 L68 3 L70 0.6 L72 3 L74 0.6 L76 3 L78 0.6 L80 3 L82 0.6" fill="none" stroke="#bd9a40" stroke-width="1"/></svg>
<span class="t m" style="left:496px;top:734px;font-size:15px;color:#bcbec4;line-height:26px;height:26px;">);</span>
<span class="t m" style="left:108px;top:760px;font-size:15px;color:#bcbec4;line-height:26px;height:26px;">}</span>
<div class="a" style="left:95px;top:548px;width:891px;height:239px;border:3.5px solid #f23c3c"></div>
<div class="a" style="left:129px;top:722px;width:409.5px;height:43px;border:3px solid #22d8d8"></div>
<svg class="a" style="left:51px;top:397px" width="20" height="18" viewBox="0 0 20 18"><circle cx="7.6" cy="9.3" r="6.1" fill="none" stroke="#548af7" stroke-width="1.3"/><circle cx="7.6" cy="9.3" r="3.1" fill="#25324d" stroke="#548af7" stroke-width="1.2"/><path d="M15 10.4 V1.8 M12.5 4.2 L15 1.6 L17.5 4.2" fill="none" stroke="#1e1f22" stroke-width="3.6" stroke-linecap="round" stroke-linejoin="round"/><path d="M15 10.2 V1.8 M12.5 4.2 L15 1.6 L17.5 4.2" fill="none" stroke="#db5c5c" stroke-width="1.5" stroke-linecap="round" stroke-linejoin="round"/></svg>
<svg class="a" style="left:79px;top:476px" width="14" height="18" viewBox="0 0 14 18"><path d="M7 1 A5 5 0 0 1 10 10 V11.5 H4 V10 A5 5 0 0 1 7 1 Z" fill="#f2c55c"/><path d="M4.5 13.2 H9.5 M5 15.2 H9" stroke="#ced0d6" stroke-width="1.1"/></svg>
<div class="a" style="left:814px;top:425px;width:125px;height:32px;background:rgba(40,42,46,0.8);border-radius:5px"></div>
<svg class="a" style="left:825px;top:433px" width="18" height="16" viewBox="0 0 18 16"><path d="M1.7 3.4 H16 M1.7 8 H13.2 A2.2 2.2 0 0 1 13.2 12.4 H9.2 M1.7 12.4 H6.2 M11.4 10 L9 12.4 L11.4 14.8" fill="none" stroke="#ced0d6" stroke-width="1.1" stroke-linecap="round" stroke-linejoin="round"/></svg>
<div class="a" style="left:850px;top:431px;width:1px;height:20px;background:#43454a"></div>
<svg class="a" style="left:859px;top:433px" width="16" height="16" viewBox="0 0 16 16"><circle cx="8" cy="8" r="7.2" fill="#fbc116"/><path d="M8 8 L1.77 4.4 A7.2 7.2 0 0 1 14.23 4.4 Z" fill="#e33b2e"/><path d="M8 8 L1.77 4.4 A7.2 7.2 0 0 0 8 15.2 Z" fill="#2da94f"/><path d="M8 8 L14.23 4.4 H8 Z" fill="#e33b2e"/><circle cx="8" cy="8" r="3.5" fill="#fff"/><circle cx="8" cy="8" r="2.7" fill="#4285f4"/></svg>
<svg class="a" style="left:884px;top:431px" width="18" height="19" viewBox="0 0 18 19"><defs><linearGradient id="ffg" x1="0.85" y1="0.1" x2="0.2" y2="0.95"><stop offset="0" stop-color="#ffe14a"/><stop offset="0.35" stop-color="#ff9a36"/><stop offset="0.7" stop-color="#ff4a4f"/><stop offset="1" stop-color="#e31587"/></linearGradient></defs><path d="M9 18 C4.6 18 1.2 14.6 1.2 10.4 C1.2 7.6 2.6 5.6 4.2 4.6 C4 5.6 4.3 6.3 4.9 6.8 C5.6 5 7.3 4.2 8.6 4.4 C10.2 4.2 10.6 2.6 10.2 1.6 C12.8 3 13.8 5 14.2 6.4 C15.8 7.6 16.8 9.2 16.8 10.8 C16.8 15 13.4 18 9 18 Z" fill="url(#ffg)"/><circle cx="8.6" cy="10.2" r="3.1" fill="#7a3be0"/><path d="M4.6 8.2 C6 7.4 7.4 8 8.6 8.4 C7.4 9 6.8 10 7.4 11.6 C5.6 11.2 4.6 9.8 4.6 8.2 Z" fill="#ff8a3a"/><path d="M12.6 5.4 C14.6 7.4 15 11 12.8 13.4 C13.6 11 13.4 8 11.4 6.6 Z" fill="#ffd23e"/></svg>
<svg class="a" style="left:911px;top:433px" width="16" height="16" viewBox="0 0 16 16"><defs><linearGradient id="edg" x1="0.1" y1="0.6" x2="1" y2="0.1"><stop offset="0" stop-color="#1a7fd8"/><stop offset="0.4" stop-color="#2bb0c4"/><stop offset="0.8" stop-color="#58d47a"/></linearGradient></defs><path d="M1 8.4 C1 4.2 4.2 1 8.2 1 C12.4 1 15.4 4 15.4 7.2 C15.4 9.4 13.8 10.6 12 10.6 C10.6 10.6 9.8 10 9.8 9.4 C9.8 8.8 10.4 8.6 10.4 7.8 C10.4 6.6 9.2 5.6 7.6 5.6 C5 5.6 3.6 7.8 3.6 9.8 C2.4 9.8 1 9.4 1 8.4 Z" fill="url(#edg)"/><path d="M1 8.2 C1.6 6.4 3.6 5.4 5.6 5.8 C4 6.8 3.4 8.6 3.8 10.6 C4.4 13.2 6.8 15 9.4 15 C5 16 1 12.8 1 8.2 Z" fill="#0e5fb0"/><path d="M3.7 9.6 C3.6 12.6 6.2 15.2 9.6 15 C12 14.8 13.8 13.4 14.8 11.6 C14.4 11.4 14.2 11.6 13.8 11.8 C11.4 13.2 7.4 12.4 6.6 9.2 C6.4 8.4 6.6 7.4 7.2 6.6 C5.4 6.8 3.8 7.8 3.7 9.6 Z" fill="#1b8ade"/></svg>
<div class="a" style="left:73px;top:795px;width:536px;height:8px;background:#47494d"></div>
<div class="a" style="left:983px;top:421px;width:1px;height:50px;background:#191a1c"></div>
<div class="a" style="left:5px;top:803.5px;width:979px;height:34.5px;background:#393b40"></div>
<div class="a" style="left:26px;top:817px;width:14px;height:14px;border:1px solid #6f737a;border-radius:2.5px;background:#2b2d30"></div>
<span class="t ui" style="left:46.5px;top:814.5px;font-size:13px;color:#dfe1e5;letter-spacing:0.005px;">在新标签打开 (B)</span>
<span class="t ui" style="left:792px;top:815px;font-size:13.5px;color:#5a5d63;letter-spacing:0.384px;">Ctrl+Enter</span>
<div class="a" style="left:866px;top:812px;width:106px;height:24px;border:1px solid #5a5d63;border-radius:4px;background:#2b2d30"></div>
<span class="t ui" style="left:880.5px;top:815px;font-size:13px;color:#dfe1e5;">打开查找窗口</span>
</body>
</html>
